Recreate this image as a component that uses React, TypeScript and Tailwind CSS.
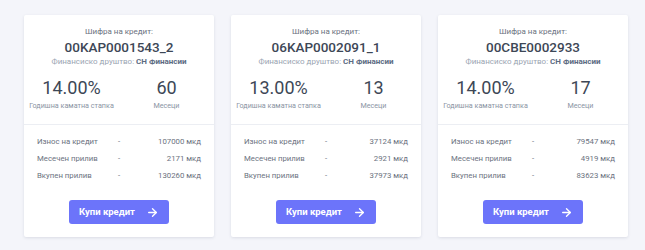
import { ArrowRight } from "lucide-react";

type Credit = {
  code: string;
  rate: string;
  months: number;
  amount: number;
  monthly: number;
  total: number;
};

const credits: Credit[] = [
  { code: "00KAP0001543_2", rate: "14.00%", months: 60, amount: 107000, monthly: 2171, total: 130260 },
  { code: "06KAP0002091_1", rate: "13.00%", months: 13, amount: 37124, monthly: 2921, total: 37973 },
  { code: "00CBE0002933", rate: "14.00%", months: 17, amount: 79547, monthly: 4919, total: 83623 },
];

function CreditCard({ c }: { c: Credit }) {
  const rows = [
    ["Износ на кредит", c.amount],
    ["Месечен прилив", c.monthly],
    ["Вкупен прилив", c.total],
  ] as const;
  return (
    <div className="w-[190px] shrink-0 rounded-[2px] bg-white shadow-[0_1px_3px_rgba(40,50,80,0.12)]">
      <div className="flex flex-col items-center pt-[11px] pb-[13px]">
        <div className="text-[8px] leading-[12px] text-[#6b7280]">Шифра на кредит:</div>
        <div className="text-[13.5px] leading-[18px] font-medium text-[#3d4756]">{c.code}</div>
        <div className="mt-[1px] text-[8px] leading-[10px] text-[#9aa4b2]">
          Финансиско друштво: <span className="font-bold text-[#5c6b82]">СН Финансии</span>
        </div>
        <div className="mt-[10px] grid w-full grid-cols-2">
          <div className="flex flex-col items-center">
            <div className="text-[18px] leading-[22px] text-[#3d4756]">{c.rate}</div>
            <div className="mt-[2px] text-[7.2px] leading-[10px] text-[#8a94a3]">Годишна каматна стапка</div>
          </div>
          <div className="flex flex-col items-center">
            <div className="text-[18px] leading-[22px] text-[#3d4756]">{c.months}</div>
            <div className="mt-[2px] text-[7.2px] leading-[10px] text-[#8a94a3]">Месеци</div>
          </div>
        </div>
      </div>
      <div className="border-t border-[#eceef3] px-[13px] pt-[8px] pb-[13px]">
        {rows.map(([label, value]) => (
          <div
            key={label}
            className="grid grid-cols-[1fr_auto_1fr] text-[7.8px] leading-[17px] text-[#6b7280]"
          >
            <span>{label}</span>
            <span>-</span>
            <span className="text-right">{value} мкд</span>
          </div>
        ))}
        <div className="mt-[16px] flex justify-center">
          <button className="flex h-[24px] w-[100px] items-center justify-center gap-[11px] rounded-[3px] bg-[#6c74fa] text-[9.5px] font-bold text-white">
            <span>Купи кредит</span>
            <ArrowRight size={13} strokeWidth={2.5} />
          </button>
        </div>
      </div>
    </div>
  );
}

export default function App() {
  return (
    <div className="h-[250px] w-[645px] bg-[#f4f5fa] font-['Roboto',sans-serif]">
      <div className="flex gap-[17px] pl-[24px] pt-[15px]">
        {credits.map((c) => (
          <CreditCard key={c.code} c={c} />
        ))}
      </div>
    </div>
  );
}
